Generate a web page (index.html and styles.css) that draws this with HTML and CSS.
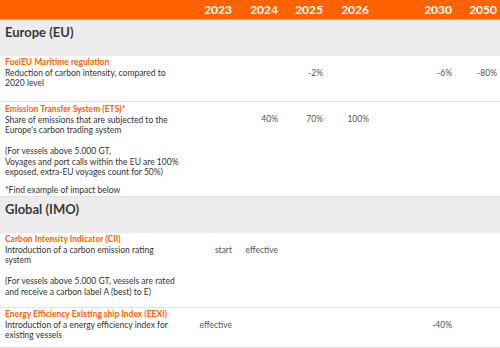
FILE: index.html
```html
<!DOCTYPE html>
<html>
<head>
<meta charset="utf-8">
<link rel="stylesheet" href="styles.css">
</head>
<body>
<div class="table">
  <div class="row head">
    <div class="label"></div>
    <div class="c">2023</div><div class="c">2024</div><div class="c">2025</div><div class="c">2026</div><div class="c wide">2030</div><div class="c">2050</div>
  </div>

  <div class="row section"><div class="label">Europe (EU)</div></div>

  <div class="row item fuel">
    <div class="label">
      <div class="title">FuelEU Maritime regulation</div>
      <p>Reduction of carbon intensity, compared to 2020 level</p>
    </div>
    <div class="c"></div><div class="c"></div><div class="c">-2%</div><div class="c"></div><div class="c wide">-6%</div><div class="c">-80%</div>
  </div>

  <div class="row item ets">
    <div class="label">
      <div class="title">Emission Transfer System (ETS)*</div>
      <p>Share of emissions that are subjected to the Europe's carbon trading system</p>
      <p class="gap">(For vessels above 5.000 GT,<br>Voyages and port calls within the EU are 100% exposed, extra-EU voyages count for 50%)</p>
      <p class="gap small">*Find example of impact below</p>
    </div>
    <div class="c"></div><div class="c">40%</div><div class="c">70%</div><div class="c">100%</div><div class="c wide"></div><div class="c"></div>
  </div>

  <div class="row section"><div class="label">Global (IMO)</div></div>

  <div class="row item cii">
    <div class="label">
      <div class="title">Carbon Intensity Indicator (CII)</div>
      <p>Introduction of a carbon emission rating system</p>
      <p class="gap">(For vessels above 5.000 GT, vessels are rated and receive a carbon label A (best) to E)</p>
    </div>
    <div class="c">start</div><div class="c">effective</div><div class="c"></div><div class="c"></div><div class="c wide"></div><div class="c"></div>
  </div>

  <div class="row item eexi">
    <div class="label">
      <div class="title">Energy Efficiency Existing ship Index (EEXI)</div>
      <p>Introduction of a energy efficiency index for existing vessels</p>
    </div>
    <div class="c">effective</div><div class="c"></div><div class="c"></div><div class="c"></div><div class="c wide">-40%</div><div class="c"></div>
  </div>
</div>
</body>
</html>
```

FILE: styles.css
```css
* { box-sizing: border-box; }
html, body { margin: 0; padding: 0; background: #fff; }
body {
  font-family: Lato, "Liberation Sans", sans-serif;
  color: #333;
  width: 500px;
  height: 348px;
  overflow: hidden;
}
.table { display: flex; flex-direction: column; }
.row {
  display: grid;
  grid-template-columns: 189px 46px 46px 45px 46px 83px 45px;
}
.c { text-align: right; padding-right: 3px; }
.head {
  background: #ff6200;
  color: #fff;
  font-weight: 700;
  font-size: 12px;
  height: 20px;
  line-height: 20px;
  border-bottom: 1px solid #f7a36b;
}
.section {
  background: #ececec;
  height: 36px;
  font-weight: 700;
  font-size: 13px;
  color: #3a3a3a;
}
.section .label { padding: 3px 5px; line-height: 18px; grid-column: 1 / -1; }
.item {
  border-bottom: 1px solid #e4e4e4;
  font-size: 8.5px;
  line-height: 10.4px;
}
.item .label { padding: 1px 8px 0 5px; }
.title { color: #ff6200; font-weight: 700; line-height: 11px; }
.item p { margin: 0; }
.item p.gap { margin-top: 10.4px; }
.item p.gap.small { margin-top: 7.5px; }
.item .c { padding-top: 12px; color: #555; }
.fuel { min-height: 46px; }
.ets { min-height: 95px; }
.ets .label { padding-top: 2px; }
.cii { min-height: 75px; }
.eexi { min-height: 40px; }
```
